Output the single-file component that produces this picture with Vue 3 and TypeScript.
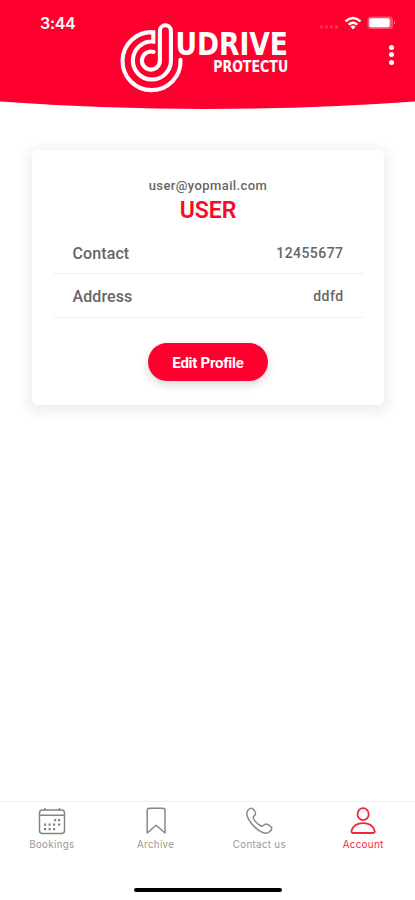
<script setup lang="ts">
interface Row { label: string; value: string; kind: string }
interface Tab { name: string; icon: string; active?: boolean }

const rows: Row[] = [
  { label: 'Contact', value: '12455677', kind: 'phone' },
  { label: 'Address', value: 'ddfd', kind: 'place' },
]
const tabs: Tab[] = [
  { name: 'Bookings', icon: 'calendar' },
  { name: 'Archive', icon: 'bookmark' },
  { name: 'Contact us', icon: 'phone' },
  { name: 'Account', icon: 'user', active: true },
]
const dots: [number, number][] = [
  [17, 13], [21, 13],
  [7, 17.5], [11.5, 17.5], [16, 17.5], [21, 17.5],
  [7, 22], [11.5, 22], [16, 22],
]
</script>

<template>
  <div class="screen">
    <header class="header">
      <svg class="curve" viewBox="0 0 415 112" aria-hidden="true">
        <path d="M0 0H415V101.5Q310 109 207 109T0 101.5Z" fill="#ff002e" />
      </svg>
      <div class="status">
        <span class="time">3:44</span>
        <svg class="signals" width="80" height="20" viewBox="0 0 80 20" aria-hidden="true">
          <g fill="#fff" opacity=".2">
            <rect x="3" y="11.5" width="3" height="3" rx="1" /><rect x="8" y="11.5" width="3" height="3" rx="1" />
            <rect x="13" y="11.5" width="3" height="3" rx="1" /><rect x="18" y="11.5" width="3" height="3" rx="1" />
          </g>
          <g fill="none" stroke="#fff" stroke-width="2.3">
            <path d="M28.5 7.4Q36 .7 43.5 7.4" /><path d="M31.6 10.7Q36 6.8 40.4 10.7" />
          </g>
          <path d="M33.4 12.5Q36 10.6 38.6 12.5L36 15.4Z" fill="#fff" />
          <rect x="50.5" y="2.5" width="25.5" height="12.5" rx="3.5" fill="#fff" opacity=".3" />
          <rect x="52.2" y="4.2" width="20.5" height="9" rx="2" fill="#fff" />
          <path d="M77 7Q79.5 8.5 77 10.5Z" fill="#fff" opacity=".5" />
        </svg>
      </div>
      <svg class="logo" width="170" height="74" viewBox="119 21 170 74" role="img" aria-label="UDRIVE PROTECTU">
        <path
          d="M180.5 59.8A29 29 0 1 1 153.3 32.2V41.6A19 19 0 1 0 170.9 60.5V30.8A5.5 5.5 0 0 0 159.9 30.8V61.2A9 9 0 1 1 153.6 52"
          fill="none" stroke="#fff" stroke-width="4.1" stroke-linejoin="miter" stroke-linecap="round" />
        <g class="wordmark">
          <text x="175.4" y="54.9" font-size="32" textLength="112.6" lengthAdjust="spacingAndGlyphs">UDRIVE</text>
          <text x="213.2" y="72.2" font-size="15" textLength="75" lengthAdjust="spacingAndGlyphs">PROTECTU</text>
        </g>
      </svg>
      <button class="more" aria-label="More"><i></i><i></i><i></i></button>
    </header>

    <main class="card">
      <p class="email">user@yopmail.com</p>
      <h1 class="name">USER</h1>
      <dl class="details">
        <div v-for="r in rows" :key="r.label" class="row" :class="r.kind">
          <dt>{{ r.label }}</dt>
          <dd>{{ r.value }}</dd>
        </div>
      </dl>
      <button class="edit"><span>Edit Profile</span></button>
    </main>

    <nav class="tabs">
      <a v-for="t in tabs" :key="t.name" class="tab" :class="{ active: t.active }">
        <svg width="28" height="28" viewBox="0 0 28 28" fill="none" stroke="currentColor" stroke-width="1.45" stroke-linejoin="round">
          <template v-if="t.icon === 'calendar'">
            <rect x="1.5" y="3" width="25" height="23.5" rx="3" />
            <path d="M1.5 8.3H26.5M7 1V4M21.5 1V4" />
            <rect v-for="([x, y], i) in dots" :key="i" :x="x - 1" :y="y - 1" width="2.2" height="2.2" fill="currentColor" stroke="none" />
          </template>
          <path v-else-if="t.icon === 'bookmark'" d="M5.2 26V3.5Q5.2 1.2 7.5 1.2H20.7Q23 1.2 23 3.5V26L14.1 18.2Z" />
          <path
            v-else-if="t.icon === 'phone'"
            d="M3 3.3C4.6 1.6 6.5.5 7.8 1.8C9.6 3.7 11.3 6.2 10.2 7.7C9.2 9 7.6 9.6 8.4 11.3C9.8 14.4 12.8 17.3 16 19C17.5 19.8 18.4 18.5 19.6 17.5C21.2 16.2 24 17.9 26 19.8C27.7 21.4 26.2 23.4 24.3 25C21.7 27.2 18.2 26.1 15.4 24.4C10.5 21.4 6.2 17 3.5 12.1C1.7 8.8.7 5.8 3 3.3Z" />
          <g v-else stroke-width="1.8">
            <ellipse cx="14.1" cy="7.2" rx="5.6" ry="6" />
            <path d="M4 26H24.2Q26.2 26 25.6 23.6C23.9 18.1 19.4 16.2 14.1 16.2S4.3 18.1 2.6 23.6Q2 26 4 26Z" />
          </g>
        </svg>
        <span>{{ t.name }}</span>
      </a>
    </nav>
    <div class="home"></div>
  </div>
</template>

<style>
body { margin: 0; background: #fff; }
</style>

<style scoped>
* { box-sizing: border-box; }
button { border: 0; padding: 0; background: none; font: inherit; }
.screen { width: 415px; height: 900px; display: flex; flex-direction: column; background: #fff; overflow: hidden; font-family: Roboto, "Noto Sans", sans-serif; }
.header { position: relative; height: 150px; flex: none; }
.curve { position: absolute; inset: 0 auto auto 0; width: 415px; height: 112px; }
.status { position: relative; display: flex; justify-content: space-between; padding: 14px 18px 0 40px; }
.time { color: #fff; font: 600 16px/19px Inter, sans-serif; letter-spacing: -.3px; }
.signals { overflow: visible; }
.logo { position: absolute; left: 119px; top: 21px; overflow: visible; }
.wordmark { fill: #fff; font-family: "DejaVu Sans", sans-serif; font-weight: 700; }
.more { position: absolute; left: 388.5px; top: 44.5px; width: 6px; display: flex; flex-direction: column; gap: 2.4px; }
.more i { width: 5.2px; height: 5.2px; border-radius: 50%; background: #fff; }
.card { width: 352px; height: 255px; margin-left: 32px; flex: none; display: flex; flex-direction: column; align-items: center; padding-top: 26px; border-radius: 6px; background: #fff; box-shadow: 0 3px 14px 4px rgba(0, 0, 0, .075); }
.email { margin: 0; font-size: 13px; line-height: 19px; font-weight: 500; letter-spacing: .4px; color: #666; }
.name { margin: 3px 0 0; font-size: 23px; line-height: 26px; font-weight: 600; letter-spacing: 0; color: #f90a26; }
.details { margin: 7px 0 0; width: 311px; }
.row { height: 43px; display: flex; justify-content: space-between; align-items: center; padding: 1px 20px 0; border-bottom: 1px solid #f0f0f0; color: #666; font-weight: 500; }
.row + .row { height: 44px; }
dt { font-size: 16px; line-height: 20px; letter-spacing: .1px; padding-top: 2px; }
dd { margin: 0; font-size: 14px; line-height: 20px; letter-spacing: .45px; }
.edit { width: 120px; height: 38px; margin-top: 25px; padding-top: 2px; border-radius: 19px; background: #ff002e; color: #fff; font-size: 15px; line-height: 36px; font-weight: 700; letter-spacing: -.25px; box-shadow: 0 4px 10px rgba(0, 0, 0, .15); }
.tabs { height: 64px; flex: none; margin-top: auto; display: grid; grid-template-columns: repeat(4, 1fr); border-top: 1px solid #eee; padding-top: 5px; }
.tab { display: flex; flex-direction: column; align-items: center; color: #858585; }
.tab span { margin-top: 4px; font: 400 9.8px/12px Inter, sans-serif; letter-spacing: .3px; color: #999; }
.tab.active, .tab.active span { color: #ef2739; }
.home { flex: none; width: 148px; height: 4.5px; border-radius: 3px; background: #000; margin: 23px 0 8px 134px; }
</style>
